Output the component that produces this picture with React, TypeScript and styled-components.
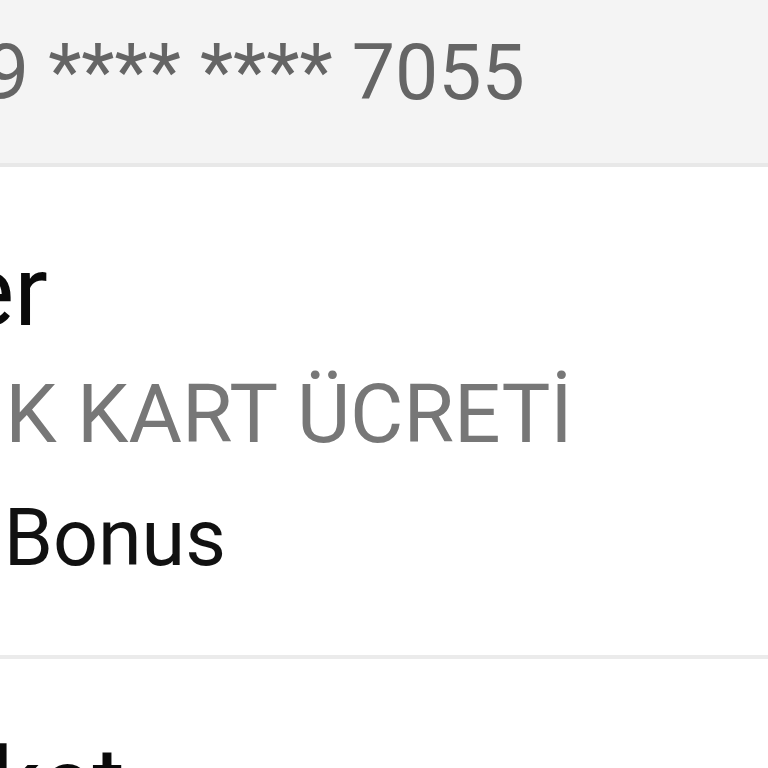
import styled, { createGlobalStyle } from "styled-components";

const GlobalStyle = createGlobalStyle`
  html, body {
    margin: 0;
    padding: 0;
    background: #ffffff;
    overflow: hidden;
  }
  body {
    width: 768px;
    height: 768px;
    font-family: Roboto, "Liberation Sans", Arial, sans-serif;
  }
`;

const App = () => {
  return (
    <>
      <GlobalStyle />
      <Page>
        <CardHeader>
          <CardNumber>5549 **** **** 7055</CardNumber>
        </CardHeader>
        <Section>
          <Title>Diğer</Title>
          <Subtitle>YILLIK KART ÜCRETİ</Subtitle>
          <Value>Kart Bonus</Value>
        </Section>
        <Section>
          <Title>Market</Title>
        </Section>
      </Page>
    </>
  );
};

export default App;

const Page = styled.div`
  width: 768px;
  height: 768px;
  overflow: hidden;
  display: flex;
  flex-direction: column;
`;

const CardHeader = styled.div`
  height: 167px;
  flex-shrink: 0;
  box-sizing: border-box;
  padding-top: 35px;
  background: #f4f4f4;
  border-bottom: 4px solid #e8e8e8;
`;

const CardNumber = styled.div`
  margin-left: -144px;
  font-size: 77px;
  line-height: 1;
  color: #656565;
  white-space: nowrap;
`;

const Section = styled.div`
  flex-shrink: 0;
  display: flex;
  flex-direction: column;
  margin-left: -172px;
  padding: 75px 0 77px;
  border-bottom: 4px solid #ebebeb;
  white-space: nowrap;
`;

const Title = styled.div`
  margin-left: -11px;
  font-size: 99px;
  line-height: 1;
  color: #0a0a0a;
`;

const Subtitle = styled.div`
  margin-top: 32px;
  margin-left: -5px;
  font-size: 82px;
  line-height: 1;
  color: #777777;
`;

const Value = styled.div`
  margin-top: 44px;
  margin-left: 9px;
  font-size: 79px;
  line-height: 1;
  color: #111111;
`;
